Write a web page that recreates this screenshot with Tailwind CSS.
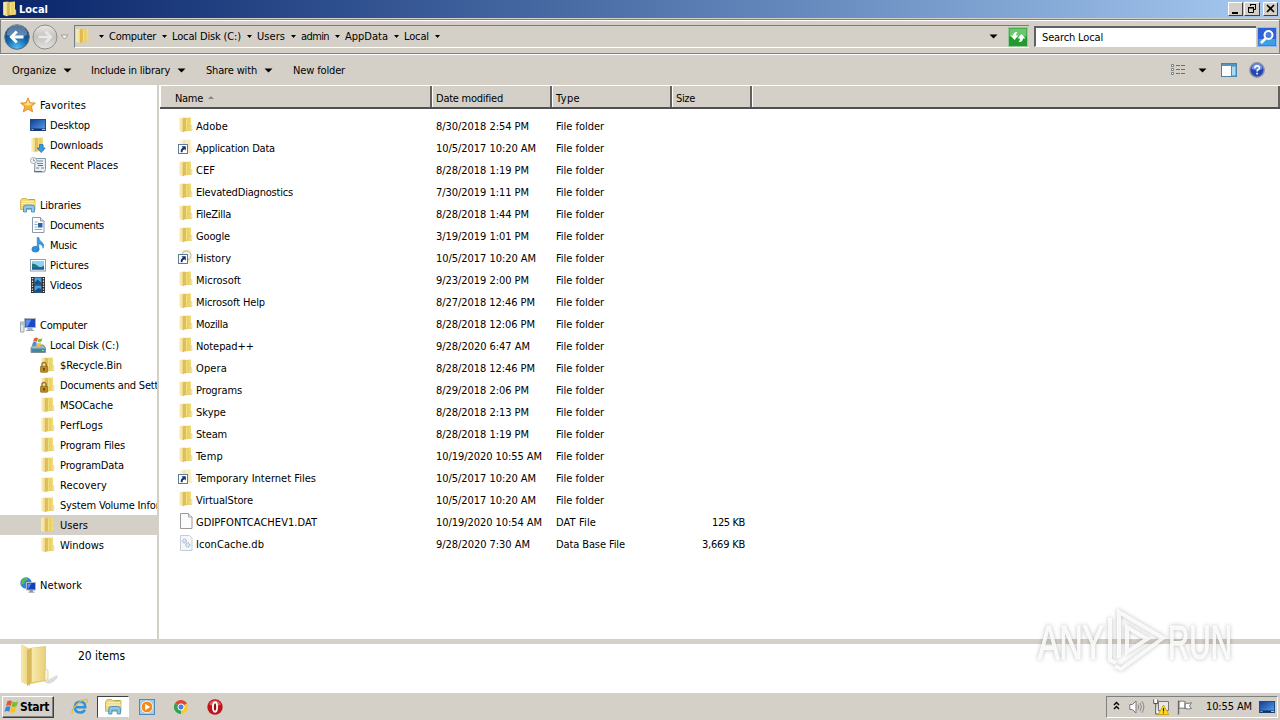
<!DOCTYPE html>
<html lang="en">
<head>
    <meta charset="UTF-8">
    <meta name="viewport" content="width=device-width, initial-scale=1.0">
    <title>Local</title>
    <script src="https://cdn.jsdelivr.net/npm/@tailwindcss/browser@4"></script>
</head>
<body class="w-[1280px] h-[720px] overflow-hidden bg-[#d4d0c8] text-black text-[11px] leading-none whitespace-nowrap font-['Tahoma','DejaVu_Sans_Condensed','DejaVu_Sans',sans-serif]">

    <!-- icon sprites -->
    <svg class="absolute w-0 h-0">
        <defs>
            <linearGradient id="gLeaf" x1="0" x2="1"><stop offset="0" stop-color="#fbf3c0"/><stop offset="1" stop-color="#e9cd68"/></linearGradient>
            <linearGradient id="gLeaf2" x1="0" x2="1"><stop offset="0" stop-color="#e0bb3e"/><stop offset="1" stop-color="#f1df80"/></linearGradient>
            <linearGradient id="gBlue" x1="0" y1="0" x2="1" y2="1"><stop offset="0" stop-color="#0f3c94"/><stop offset="1" stop-color="#5ba4ea"/></linearGradient>
            <radialGradient id="gBack" cx=".5" cy=".95" r=".9"><stop offset="0" stop-color="#4cc4f4"/><stop offset=".5" stop-color="#1667ab"/><stop offset="1" stop-color="#0d3a70"/></radialGradient>
            <linearGradient id="gFwd" x1="0" y1="0" x2="0" y2="1"><stop offset="0" stop-color="#e9e8e4"/><stop offset=".5" stop-color="#c3c2be"/><stop offset="1" stop-color="#e4e3df"/></linearGradient>
            <linearGradient id="gBig" x1="0" x2="1"><stop offset="0" stop-color="#f7e9aa"/><stop offset="1" stop-color="#e8cf78"/></linearGradient>
            <symbol id="folder" viewBox="0 0 16 16">
                <path d="M6.500 1l6.500-.5v13.300l-6.500.700z" fill="url(#gLeaf2)"/>
                <path d="M1.200 1l5.300-.5v13.500l-1.500 1.300-3.800-1.300z" fill="url(#gLeaf)"/>
                <path d="M5 1.800l1.800-1v13.200L5 15.300z" fill="#dfb75c"/>
                <path d="M8.700 1.500v12.300" stroke="#f3e184" stroke-width="1.200"/>
                <path d="M12.200 8.700h1.600v4.800h-1.600z" fill="#fbf3c3" stroke="#d9bd5c" stroke-width=".5"/>
            </symbol>
            <symbol id="lock" viewBox="0 0 16 16">
                <use href="#folder"/>
                <path d="M2 10V7.600a2.100 2.100 0 014.200 0V10" fill="none" stroke="#9a7420" stroke-width="1.300"/>
                <rect x=".3" y="9.300" width="7.400" height="6" rx=".8" fill="#c08a1e" stroke="#7d5a10" stroke-width=".6"/>
                <path d="M4 11v2.500" stroke="#4b3405" stroke-width="1.300"/>
            </symbol>
            <symbol id="link" viewBox="0 0 16 16">
                <use href="#folder" opacity=".4"/>
                <rect x=".5" y="5.500" width="9" height="9" fill="#fff" stroke="#5f7b96"/>
                <path d="M3.400 7.200h4.400v4.400L6.400 10.300q-2 .6-2 3h-1.600q-.5-3.300 2-4.600z" fill="#16306b"/>
            </symbol>
            <symbol id="linkHistory" viewBox="0 0 16 16">
                <use href="#folder" opacity=".4"/>
                <circle cx="8.500" cy="6.500" r="4.500" fill="#eef3f2" stroke="#b9b68e"/>
                <rect x=".5" y="5.500" width="9" height="9" fill="#fff" stroke="#5f7b96"/>
                <path d="M3.400 7.200h4.400v4.400L6.400 10.300q-2 .6-2 3h-1.600q-.5-3.300 2-4.600z" fill="#16306b"/>
            </symbol>
            <symbol id="file" viewBox="0 0 16 16">
                <path d="M2.500.5h8l3.500 3.500v11.500H2.500z" fill="#fcfcfc" stroke="#9a9a9a"/>
                <path d="M10.500.5v3.500H14" fill="#e5e5e5" stroke="#a8a8a8"/>
            </symbol>
            <symbol id="db" viewBox="0 0 16 16">
                <path d="M2.500.5h9l2.500 2.500v12.500H2.500z" fill="#f5f8fb" stroke="#c3ced9"/>
                <circle cx="6.500" cy="6" r="2" fill="#dde6ef" stroke="#93a5b8" stroke-dasharray="1.200 .6"/>
                <circle cx="9.800" cy="10" r="2.100" fill="#dde6ef" stroke="#93a5b8" stroke-dasharray="1.200 .6"/>
            </symbol>
            <symbol id="star" viewBox="0 0 16 16">
                <path d="M8 .8l2.100 4.900 5.300.4-4 3.500 1.300 5.300L8 12.100l-4.700 2.800 1.300-5.300-4-3.500 5.300-.4z" fill="#f9b233" stroke="#d98324" stroke-width=".8"/>
                <path d="M8 2.800l1.400 3.700 3.600.3-4.600 1.600-4.900-1.500 3.200-.4z" fill="#ffe58a"/>
            </symbol>
            <symbol id="desktop" viewBox="0 0 16 16">
                <rect x=".5" y="2.500" width="15" height="11" fill="url(#gBlue)" stroke="#1b4b8c"/>
                <path d="M1 12.500h14" stroke="#17305c" stroke-width="2"/>
                <path d="M1.500 12.500h2" stroke="#62d06c"/>
                <path d="M12 12.500h3" stroke="#9fc4ef"/>
            </symbol>
            <symbol id="downloads" viewBox="0 0 16 16">
                <use href="#folder"/>
                <path d="M9.500 7.500h3.500v3.500h2.200l-4 4.600-4-4.600h2.300z" fill="#3c9be0" stroke="#1a66ad" stroke-width=".7"/>
            </symbol>
            <symbol id="recent" viewBox="0 0 16 16">
                <path d="M5 1.500h10.500v11l-1 2.500H4.500z" fill="#e9eef1" stroke="#8797a3"/>
                <path d="M7 4h6M7 6.500h6M6 11h3M11 11h3" stroke="#6d8fab"/>
                <path d="M8 8.500h5M4 14.500h8" stroke="#5f6f7b"/>
                <circle cx="3.500" cy="3.500" r="3" fill="#f3f6f7" stroke="#9daab3"/>
                <path d="M3.500 1.800v1.900H5" stroke="#5f6f7b" stroke-width=".7" fill="none"/>
            </symbol>
            <symbol id="library" viewBox="0 0 16 16">
                <path d="M.5 3.500L2 1.500h4.500l1 1h7.500v10H.5z" fill="#f0d878" stroke="#cfa941" stroke-width=".8"/>
                <path d="M2 4.500h12M1 6.500h14" stroke="#fbf1bd"/>
                <path d="M9 2.500h5" stroke="#7cbb55"/>
                <path d="M3.500 15v-4.500q0-2.500 2.500-2.500h6q2.500 0 2.500 2.500V15h-3v-3.500H6.500V15z" fill="#8bc8ea" stroke="#3c86bd" stroke-width=".8"/>
            </symbol>
            <symbol id="documents" viewBox="0 0 16 16">
                <path d="M2.500.5h8l3.500 3.500v11.500H2.500z" fill="#fff" stroke="#8a9bb0"/>
                <path d="M10.500.5v3.500H14" fill="#dfe8f2" stroke="#8a9bb0"/>
                <path d="M4.500 5h3M4.500 7.500h3M4.500 10h3M4.500 12.500h7.500" stroke="#89aacb"/>
                <rect x="8" y="6" width="4.500" height="4.500" fill="#2d62a5"/>
            </symbol>
            <symbol id="music" viewBox="0 0 16 16">
                <ellipse cx="5.500" cy="12.200" rx="3.600" ry="2.900" fill="#2f93de" stroke="#1a6bb5" stroke-width=".6"/>
                <path d="M7.200.5h1.600q.3 2.600 2.500 4.200 3.700 2.500 1.700 6.600 0-3.500-4.200-4.600v6H7.200z" fill="#3b9fe4" stroke="#1a6bb5" stroke-width=".5"/>
            </symbol>
            <symbol id="pictures" viewBox="0 0 16 16">
                <rect x=".5" y="2.500" width="15" height="11.500" fill="#fff" stroke="#8f9da8"/>
                <path d="M2 4h12v8.500H2z" fill="#8fd1f2"/>
                <path d="M2 6.500q4 0 6 2.500t6-.5v4H2z" fill="#1f7a82"/>
                <path d="M2 10.500h12v2H2z" fill="#1c5e96"/>
            </symbol>
            <symbol id="videos" viewBox="0 0 16 16">
                <rect x="1" y="0" width="14" height="16" fill="#2c2c2c"/>
                <path d="M2.500 1v14M13.500 1v14" stroke="#ececec" stroke-width="1.300" stroke-dasharray="1.300 1.300"/>
                <path d="M4.500.5h7v7h-7zM4.500 8.500h7v7h-7z" fill="#4e9edb"/>
                <path d="M4.500 5.500l3-3 4 3.500v1.500h-7zM4.500 14l4-3 3 1v3.500h-7z" fill="#174f8c"/>
            </symbol>
            <symbol id="computer" viewBox="0 0 16 16">
                <path d="M.5 5h3.500v10H.5z" fill="#e6e9ec" stroke="#8b949c" stroke-width=".8"/>
                <path d="M1.200 7h2" stroke="#5fae5e"/>
                <rect x="4.500" y="1.500" width="11" height="9" fill="#1b49c4" stroke="#aab5c2"/>
                <path d="M5.500 2.500h6l-4 7h-2z" fill="#5c8df0"/>
                <path d="M8 11h4v2H8zM6 13.500h8" fill="#bcc5cf" stroke="#99a3ae"/>
            </symbol>
            <symbol id="disk" viewBox="0 0 16 16">
                <path d="M1 11l2-3h10.500l2 3v4.500H1z" fill="#a9b4bd" stroke="#6e7a84" stroke-width=".8"/>
                <path d="M1.500 11.500h13.500v3.500H1.500z" fill="#3d88a8"/>
                <path d="M12 13.500h2" stroke="#8af07e"/>
                <path d="M4 1.500Q6-.3 8 1.300L7 4.700Q5 3.500 3 5z" fill="#e8602a"/>
                <path d="M8.600 1.600Q10.500 2.600 12.600 1l-1.100 3.600q-2 1.300-3.900.3z" fill="#86bb36"/>
                <path d="M2.800 5.700q2-1.500 4-.3L5.900 8.900q-2-1.200-4 .3z" fill="#3f8fe0"/>
                <path d="M7.400 5.700q2 1 3.900-.3L10.300 9q-2 1.300-3.900.3z" fill="#f6c427"/>
            </symbol>
            <symbol id="network" viewBox="0 0 16 16">
                <circle cx="6" cy="6" r="5.700" fill="#2d86cf"/>
                <path d="M2 3q2-2.500 5-2.500l1 2-3 1.500-1 3-3 .5zM6.500 6l3-1 1.500 2-3 4z" fill="#57bd4e"/>
                <rect x="6.500" y="5.500" width="9" height="7.500" fill="#173fb8" stroke="#b0bbc8"/>
                <path d="M7.500 6.500h4l-3 5h-1z" fill="#5a8af0"/>
                <path d="M10 13h2.500v1.500H10zM8.500 15.200h6" fill="#8b95a1" stroke="#8b95a1"/>
            </symbol>
            <symbol id="winflag" viewBox="0 0 16 14">
                <path d="M3.300 1.300Q5.500-.3 8 1.100L6.700 6Q4.500 4.700 2 6.100z" fill="#e8562a"/>
                <path d="M8.700 1.500q2.600 1.400 5.400-.2l-1.500 4.900q-2.600 1.500-5.100.2z" fill="#7fb832"/>
                <path d="M1.800 7q2.400-1.400 4.700-.2l-1.300 4.900Q3 10.300.4 11.900z" fill="#3b86dc"/>
                <path d="M7.200 7.200q2.500 1.200 5.100-.2l-1.400 4.900q-2.600 1.500-5 .1z" fill="#f8c321"/>
            </symbol>
        </defs>
    </svg>

    <div class="w-[1280px] h-[720px] flex flex-col">
        <!-- title bar -->
        <header class="h-[18px] shrink-0 flex items-center pl-[2px] pr-[2px] bg-linear-to-r from-[#0a246a] to-[#a6caf0]">
            <svg class="w-4 h-4"><use href="#folder"/></svg>
            <span class="ml-[1px] font-bold text-white" data-w="29">Local</span>
            <div class="flex-1"></div>
            <div class="flex h-[14px]">
                <div class="w-[15px] bg-[#d4d0c8] border border-t-white border-l-white border-b-[#404040] border-r-[#404040]">
                    <svg class="w-[13px] h-3" viewBox="0 0 13 12"><path d="M3 9h6v2H3z"/></svg>
                </div>
                <div class="ml-px w-[16px] bg-[#d4d0c8] border border-t-white border-l-white border-b-[#404040] border-r-[#404040]">
                    <svg class="w-[14px] h-3" viewBox="0 0 14 12" fill="none" stroke="#000"><path d="M5 1.500h6M5.500 3V1M10.500 1v5.500H9M3 4.500h6M3 5h6M3.500 4v5.500h5V4"/></svg>
                </div>
                <div class="ml-[3px] w-[15px] bg-[#d4d0c8] border border-t-white border-l-white border-b-[#404040] border-r-[#404040]">
                    <svg class="w-[13px] h-3" viewBox="0 0 13 12"><path d="M3 2l7 7M10 2L3 9" stroke="#000" stroke-width="1.600"/></svg>
                </div>
            </div>
        </header>

        <!-- address bar -->
        <div class="h-[37px] shrink-0 flex pt-[1px]">
            <div class="w-[1280px] h-[35px] flex items-center border border-[#808080] shadow-[inset_0_1px_0_#fff,0_1px_0_#fff]">
                <svg class="w-[70px] h-[30px] ml-[3px]" viewBox="0 0 70 30">
                    <circle cx="13" cy="15" r="12.300" fill="url(#gBack)" stroke="#5b6f84"/>
                    <path d="M2.500 13a10.500 10.500 0 0121 0q-10 3-21 0z" fill="#fff" opacity=".3"/>
                    <path d="M19.500 15H8M12.800 9.500L7.300 15l5.500 5.500" stroke="#fff" stroke-width="2.800" fill="none"/>
                    <circle cx="41" cy="15" r="12" fill="url(#gFwd)" stroke="#8c8c8a"/>
                    <path d="M34.500 15H46M41.500 9.500L47 15l-5.500 5.500" stroke="#e9e8e5" stroke-width="2.600" fill="none"/>
                    <path d="M57 13h7l-3.500 4z" fill="#f5f5f5" stroke="#8f8f8c" stroke-width=".8"/>
                </svg>
                <div class="h-[23px] w-[955px] flex items-center border-t border-l border-t-[#6f7f86] border-l-[#6f7f86] border-b border-b-white">
                    <svg class="w-4 h-4 mt-[-2px]"><use href="#folder"/></svg>
                    <div id="crumbs" class="flex flex-1 pl-[2px]"></div>
                    <svg class="w-[9px] h-[5px] mr-[31px]" viewBox="0 0 9 5"><path d="M.5.500h8l-4 4z"/></svg>
                </div>
            </div>
            <div class="w-[272px] ml-[-272px] flex items-center h-[35px]">
                <svg class="w-5 h-5" viewBox="0 0 20 20">
                    <rect x=".5" y=".5" width="19" height="19" fill="#239a2e" stroke="#98c99b"/>
                    <path d="M1.500 1.500h17v8h-17z" fill="#6cc66e"/>
                    <path d="M4.500 11.500V7.500L2.800 7.500 6 4l3.500 3.500H7.500q0 2.500 1 4" fill="none"/>
                    <path d="M5 8.500H2.500L6.500 13l4-4.500H8q0-2 1.500-3.500Q5.500 4.500 5 8.500zM15 11.500h2.500L13.500 7l-4 4.500H12q0 2-1.500 3.500 4 .5 4.500-3.500z" fill="#fff"/>
                </svg>
                <div class="ml-[6px] w-[222px] h-[21px] flex items-center pl-[6px] bg-white border-t-2 border-l-2 border-t-[#606060] border-l-[#606060] border-b border-b-white"><span data-w="61">Search Local</span></div>
                <svg class="w-5 h-5 ml-[1px]" viewBox="0 0 20 20">
                    <rect x=".5" y=".5" width="19" height="19" fill="#2c60d6" stroke="#9cb9e8"/>
                    <path d="M1.500 12h17v6.500h-17z" fill="#3d9fe8"/>
                    <circle cx="11.500" cy="8" r="4" fill="#4a7be0" stroke="#fff" stroke-width="2"/>
                    <path d="M8.500 11.500L4 16" stroke="#fff" stroke-width="2.500"/>
                </svg>
            </div>
        </div>

        <!-- command bar -->
        <div class="h-[30px] shrink-0 flex items-center pl-[12px] pr-[15px]">
            <span data-w="44">Organize</span>
            <svg class="ml-[7px] w-[9px] h-[5px]" viewBox="0 0 9 5"><path d="M.5.500h8l-4 4z"/></svg>
            <span class="ml-[19px]" data-w="79">Include in library</span>
            <svg class="ml-[7px] w-[9px] h-[5px]" viewBox="0 0 9 5"><path d="M.5.500h8l-4 4z"/></svg>
            <span class="ml-[20px]" data-w="51">Share with</span>
            <svg class="ml-[7px] w-[9px] h-[5px]" viewBox="0 0 9 5"><path d="M.5.500h8l-4 4z"/></svg>
            <span class="ml-[20px]" data-w="52">New folder</span>
            <div class="flex-1"></div>
            <svg class="w-4 h-4" viewBox="0 0 16 16" fill="none">
                <path d="M1.500 2.500h2v2h-2zM1.500 6.500h2v2h-2zM1.500 10.500h2v2h-2z" fill="#fff" stroke="#777f87"/>
                <path d="M6 3.500h4M11 3.500h4M6 7.500h4M11 7.500h4M6 11.500h4M11 11.500h4" stroke="#66717c"/>
            </svg>
            <svg class="ml-[12px] w-[9px] h-[5px]" viewBox="0 0 9 5"><path d="M.5.500h8l-4 4z"/></svg>
            <svg class="ml-[14px] w-4 h-[14px]" viewBox="0 0 16 14">
                <rect x=".5" y=".5" width="15" height="13" fill="#fff" stroke="#4b7fa3"/>
                <path d="M1 2h14" stroke="#5b93b8" stroke-width="2"/>
                <path d="M10.500 3h4.500v10h-4.500z" fill="#a7dcf2" stroke="#4b8fb5"/>
            </svg>
            <svg class="ml-[12px] w-4 h-4" viewBox="0 0 16 16">
                <circle cx="8" cy="8" r="7.200" fill="#2446b4" stroke="#8b93ad" stroke-width="1.400"/>
                <path d="M2.500 7a5.500 5.500 0 0111 0q-5 2-11 0z" fill="#6f90e6"/>
                <path d="M5.800 6.300q0-2.400 2.300-2.400t2.300 2q0 1.300-1.300 1.900-1 .5-1 1.700M8.100 10.700v1.700" stroke="#fff" stroke-width="1.600" fill="none"/>
            </svg>
        </div>

        <!-- main area -->
        <div class="h-[554px] shrink-0 flex">
            <nav id="tree" class="w-[157px] pt-[10px] bg-white overflow-hidden"></nav>
            <div class="w-[3px] bg-[#d4d0c8] border-r border-r-white"></div>
            <main class="flex-1 bg-white">
                <div class="h-[24px] flex bg-[#d4d0c8] border-t border-t-white border-b-2 border-b-[#505050]">
                    <div class="w-[272px] flex items-center pt-[3px] pl-[14px] border-l border-l-white border-r-2 border-r-[#606060]">
                        <span data-w="28">Name</span>
                        <svg class="ml-[5px] mb-[2px] w-[6px] h-[3px]" viewBox="0 0 6 3"><path d="M0 3l3-3 3 3z" fill="#8a8782"/></svg>
                    </div>
                    <div class="w-[120px] flex items-center pt-[3px] pl-[3px] border-l border-l-white border-r-2 border-r-[#606060]"><span data-w="67">Date modified</span></div>
                    <div class="w-[120px] flex items-center pt-[3px] pl-[3px] border-l border-l-white border-r-2 border-r-[#606060]"><span data-w="24">Type</span></div>
                    <div class="w-[80px] flex items-center pt-[3px] pl-[3px] border-l border-l-white border-r-2 border-r-[#606060]"><span data-w="19">Size</span></div>
                    <div class="flex-1 border-l border-l-white border-r-2 border-r-[#606060]"></div>
                </div>
                <div id="files" class="pt-[6px]"></div>
            </main>
        </div>

        <!-- details pane -->
        <div class="h-[53px] shrink-0 flex bg-white border-t-[5px] border-t-[#d4d0c8]">
            <svg class="ml-[18px] w-[42px] h-[44px]" viewBox="0 0 42 44">
                <path d="M26 38l13-7q3 4-8 9z" fill="#dcdcdc"/>
                <path d="M12 4L28 2v35l-16 3z" fill="#e3c868"/>
                <path d="M14 4l14-1v33l-14 2z" fill="url(#gBig)"/>
                <path d="M3 0l9 5v37L3 38z" fill="url(#gBig)"/>
                <path d="M9 6l4-2v35l-4 3z" fill="#d9b95e"/>
                <path d="M27 26q3-2 3 2v7l-3 2z" fill="#fdf8dd" stroke="#d5bd6c" stroke-width=".6"/>
            </svg>
            <span class="ml-[18px] mt-[5px] text-[12px] leading-[14px]" data-w="47">20 items</span>
        </div>

        <!-- taskbar -->
        <footer class="h-[28px] shrink-0 flex items-center bg-[#d4d0c8] border-t border-t-white pl-[2px]">
            <div class="w-[52px] h-[22px] flex items-center border border-t-white border-l-white border-r-[#404040] border-b-[#404040] shadow-[inset_-1px_-1px_0_#808080]">
                <svg class="ml-[1px] w-4 h-[14px]"><use href="#winflag"/></svg>
                <span class="font-bold text-[12px]" data-w="29">Start</span>
            </div>
            <svg class="ml-[17px] w-[17px] h-[17px]" viewBox="0 0 17 17" fill="none">
                <path d="M3.800 9.300h10.400q.2-5.500-5-5.600-5 .2-5.400 5.500 0 5 5.400 5.300 3.200 0 4.600-2.700" stroke="#2e93dd" stroke-width="2.600"/>
                <path d="M1.500 15.500Q-.5 13 5.500 7T15.800 1.500q1.200 1-.3 3.500" stroke="#eab735" stroke-width="1.300"/>
            </svg>
            <div class="ml-[9px] w-[32px] h-[22px] flex items-center justify-center bg-white border border-t-[#404040] border-l-[#404040] border-r-white border-b-[#d4d0c8]">
                <svg class="w-[17px] h-[17px]" viewBox="0 0 16 16"><use href="#library"/></svg>
            </div>
            <svg class="ml-[10px] w-4 h-4" viewBox="0 0 16 16">
                <rect x=".5" y=".5" width="15" height="15" fill="#a5cdea" stroke="#4f89b8"/>
                <circle cx="8" cy="8" r="5.800" fill="#f28a1c" stroke="#fff" stroke-width=".8"/>
                <path d="M6.200 4.800L11.200 8l-5 3.200z" fill="#fff"/>
            </svg>
            <svg class="ml-[19px] w-[14px] h-[14px]" viewBox="0 0 14 14">
                <path d="M7 7L.9 3.500A7 7 0 0113 3.500z" fill="#e04634"/>
                <path d="M7 7l6-3.500A7 7 0 017 14z" fill="#f8cb35"/>
                <path d="M7 7v7A7 7 0 01.9 3.500z" fill="#31a350"/>
                <circle cx="7" cy="7" r="3.100" fill="#4183ea" stroke="#fff"/>
            </svg>
            <svg class="ml-[19px] w-[16px] h-[16px]" viewBox="0 0 16 16">
                <circle cx="8" cy="8" r="7.700" fill="#bd151b"/>
                <path d="M2 5.500a6.500 6.500 0 0112 0q-6 3-12 0z" fill="#e5595a"/>
                <ellipse cx="8" cy="8" rx="2.100" ry="4.700" fill="#8f0d12" stroke="#fff" stroke-width="1.900"/>
            </svg>
            <div class="flex-1"></div>
            <div class="w-[172px] h-[22px] mr-[2px] flex items-center border border-t-[#808080] border-l-[#808080] border-r-white border-b-white">
                <svg class="ml-[6px] mb-[3px] w-[7px] h-[9px]" viewBox="0 0 7 9" fill="none" stroke="#000" stroke-width="1.400"><path d="M1 4l2.500-2.500L6 4M1 8l2.500-2.500L6 8"/></svg>
                <svg class="ml-[9px] w-4 h-4" viewBox="0 0 16 16" fill="none">
                    <path d="M.8 5.500h2.500L7 2v12l-3.700-3.500H.8z" fill="#fff" stroke="#777"/>
                    <path d="M9 5.500q1.500 2.500 0 5M11 3.800q2.800 4.200 0 8.400M13 2.300q3.800 5.700 0 11.400" stroke="#888"/>
                </svg>
                <svg class="ml-[8px] w-4 h-4" viewBox="0 0 16 16">
                    <path d="M5.500 2.500h10v9h-10z" fill="#e8e8e8" stroke="#777"/>
                    <path d="M.7.500v4h4v-4M2.700 4.500v10.500h3" fill="#fff" stroke="#555"/>
                    <path d="M10.500 6l5.300 9.500H5.200z" fill="#ffdc1f" stroke="#c89a00" stroke-width=".8"/>
                    <path d="M10.500 9v3.500M10.500 13.500v1" stroke="#222" stroke-width="1.200"/>
                </svg>
                <svg class="ml-[8px] w-4 h-4" viewBox="0 0 16 16">
                    <path d="M2 2.500q3-1 6 0v7q-3-1-6 0zM8 4q3 1 6.500-.3L12.500 7l2 2.500q-3 1-6.500 0z" fill="#fff" stroke="#777"/>
                    <path d="M1.500 1.500V15.500" stroke="#666" stroke-width="1.300"/>
                </svg>
                <span class="ml-[13px]" data-w="46">10:55 AM</span>
                <svg class="ml-[7px] w-4 h-4"><use href="#desktop"/></svg>
            </div>
        </footer>
    </div>

    <!-- watermark over the window -->
    <svg class="absolute left-[1030px] top-[602px] w-[220px] h-[76px] drop-shadow-[0_0_2px_rgba(0,0,0,0.3)]" viewBox="0 0 220 76" fill="none">
        <g fill="#fff" fill-opacity=".85" stroke="#fff" stroke-opacity=".85" font-family="Liberation Sans Narrow, Liberation Sans" font-size="49">
            <text x="8" y="57" textLength="66" lengthAdjust="spacingAndGlyphs">ANY</text>
            <text x="138" y="57" textLength="64" lengthAdjust="spacingAndGlyphs">RUN</text>
        </g>
        <path d="M80 16v42l6 3M89 56V10l44 26-42 31-6-3M97 50V25l20 12z" stroke="#fff" stroke-opacity=".85" stroke-width="4"/>
    </svg>

    <script>
        // label, width in px
        const crumbs = [['Computer', 47], ['Local Disk (C:)', 69], ['Users', 28], ['admin', 28], ['AppData', 43], ['Local', 25]];

        // level, icon, label, width in px
        const tree = [
            [0, 'star', 'Favorites', 46], [1, 'desktop', 'Desktop', 40], [1, 'downloads', 'Downloads', 53], [1, 'recent', 'Recent Places', 68],
            null,
            [0, 'library', 'Libraries', 41], [1, 'documents', 'Documents', 54], [1, 'music', 'Music', 27], [1, 'pictures', 'Pictures', 39], [1, 'videos', 'Videos', 32],
            null,
            [0, 'computer', 'Computer', 47], [1, 'disk', 'Local Disk (C:)', 69],
            [2, 'lock', '$Recycle.Bin', 62], [2, 'lock', 'Documents and Settings', 118], [2, 'folder', 'MSOCache', 53], [2, 'folder', 'PerfLogs', 43],
            [2, 'folder', 'Program Files', 65], [2, 'folder', 'ProgramData', 64], [2, 'folder', 'Recovery', 47],
            [2, 'folder', 'System Volume Information', 133], [2, 'folder', 'Users', 28], [2, 'folder', 'Windows', 44],
            null,
            [0, 'network', 'Network', 42],
        ];

        // icon, name, width, date, width, type, width, size, width
        const files = [
            ['folder', 'Adobe', 32, '8/30/2018 2:54 PM', 93],
            ['link', 'Application Data', 79, '10/5/2017 10:20 AM', 100],
            ['folder', 'CEF', 19, '8/28/2018 1:19 PM', 93],
            ['folder', 'ElevatedDiagnostics', 97, '7/30/2019 1:11 PM', 93],
            ['folder', 'FileZilla', 35, '8/28/2018 1:44 PM', 93],
            ['folder', 'Google', 34, '3/19/2019 1:01 PM', 93],
            ['linkHistory', 'History', 35, '10/5/2017 10:20 AM', 100],
            ['folder', 'Microsoft', 45, '9/23/2019 2:00 PM', 93],
            ['folder', 'Microsoft Help', 69, '8/27/2018 12:46 PM', 99],
            ['folder', 'Mozilla', 32, '8/28/2018 12:06 PM', 99],
            ['folder', 'Notepad++', 58, '9/28/2020 6:47 AM', 94],
            ['folder', 'Opera', 31, '8/28/2018 12:46 PM', 99],
            ['folder', 'Programs', 46, '8/29/2018 2:06 PM', 93],
            ['folder', 'Skype', 30, '8/28/2018 2:13 PM', 93],
            ['folder', 'Steam', 31, '8/28/2018 1:19 PM', 93],
            ['folder', 'Temp', 27, '10/19/2020 10:55 AM', 106],
            ['link', 'Temporary Internet Files', 120, '10/5/2017 10:20 AM', 100],
            ['folder', 'VirtualStore', 57, '10/5/2017 10:20 AM', 100],
            ['file', 'GDIPFONTCACHEV1.DAT', 121, '10/19/2020 10:54 AM', 106, 'DAT File', 40, '125 KB', 33],
            ['db', 'IconCache.db', 68, '9/28/2020 7:30 AM', 94, 'Data Base File', 69, '3,669 KB', 43],
        ];

        const arrow = '<svg class="w-[5px] h-[3px] mt-[4px] ml-[6px] mr-[5px]" viewBox="0 0 5 3"><path d="M0 0h5L2.500 3z"/></svg>';
        document.getElementById('crumbs').innerHTML = arrow + crumbs.map(([t, w]) => `<span data-w="${w}">${t}</span>${arrow}`).join('');

        const indent = ['pl-[20px]', 'pl-[30px]', 'pl-[40px]'];
        document.getElementById('tree').innerHTML = tree.map((row, i) => {
            if (!row) return '<div class="h-[20px]"></div>';
            const [level, icon, text, w] = row;
            return `<div class="h-[20px] flex items-center ${indent[level]} ${i === 21 ? 'bg-[#d4d0c8]' : ''}">
                <svg class="w-4 h-4 shrink-0 mr-[4px]"><use href="#${icon}"/></svg><span data-w="${w}">${text}</span></div>`;
        }).join('');

        document.getElementById('files').innerHTML = files.map(([icon, name, w, date, dw, type = 'File folder', tw = 48, size = '', sw = 0]) =>
            `<div class="h-[22px] flex items-center pl-[18px]">
                <svg class="w-4 h-4 mr-[2px] mb-[2px]"><use href="#${icon}"/></svg>
                <div class="w-[240px]"><span data-w="${w}">${name}</span></div>
                <div class="w-[120px]"><span data-w="${dw}">${date}</span></div>
                <div class="w-[120px]"><span data-w="${tw}">${type}</span></div>
                <div class="w-[69px] text-right">${size ? `<span data-w="${sw}">${size}</span>` : ''}</div>
            </div>`).join('');

        // track every label to its width
        function fitLabels() {
            document.querySelectorAll('[data-w]').forEach(el => {
                el.style.letterSpacing = '0px';
                const now = el.getBoundingClientRect().width;
                el.style.letterSpacing = ((el.dataset.w - now) / el.textContent.length) + 'px';
            });
        }
        fitLabels();
        window.addEventListener('load', () => {
            fitLabels();
            requestAnimationFrame(fitLabels);
        });
        document.fonts.ready.then(fitLabels);
    </script>
</body>
</html>
